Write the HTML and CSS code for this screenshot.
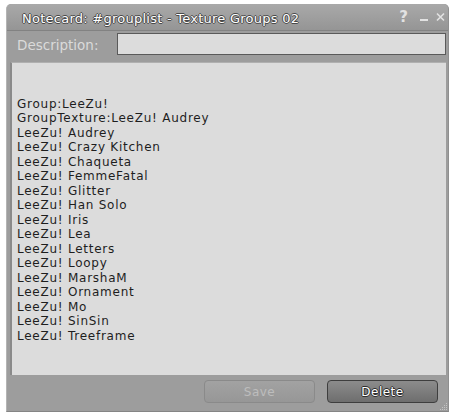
FILE: index.html
```html
<!DOCTYPE html>
<html>
<head>
<meta charset="utf-8">
<link rel="stylesheet" href="styles.css">
</head>
<body>
<div class="window">
  <div class="titlebar">
    <span class="title">Notecard: #grouplist - Texture Groups 02</span>
    <span class="controls">
      <span class="ctl help">?</span>
      <svg class="ctl-svg min" width="8" height="10" viewBox="0 0 8 10"><rect x="0" y="7" width="8" height="2" fill="#e2e2e2"/></svg>
      <svg class="ctl-svg close" width="9" height="10" viewBox="0 0 9 10"><path d="M1 1.5 L8 8.5 M8 1.5 L1 8.5" stroke="#e2e2e2" stroke-width="1.6"/></svg>
    </span>
  </div>
  <div class="descrow">
    <span class="desclabel">Description:</span>
    <div class="descinput"></div>
  </div>
  <div class="editor">
    <div class="line">&nbsp;</div>
    <div class="line">Group:LeeZu!</div>
    <div class="line">GroupTexture:LeeZu! Audrey</div>
    <div class="line">LeeZu! Audrey</div>
    <div class="line">LeeZu! Crazy Kitchen</div>
    <div class="line">LeeZu! Chaqueta</div>
    <div class="line">LeeZu! FemmeFatal</div>
    <div class="line">LeeZu! Glitter</div>
    <div class="line">LeeZu! Han Solo</div>
    <div class="line">LeeZu! Iris</div>
    <div class="line">LeeZu! Lea</div>
    <div class="line">LeeZu! Letters</div>
    <div class="line">LeeZu! Loopy</div>
    <div class="line">LeeZu! MarshaM</div>
    <div class="line">LeeZu! Ornament</div>
    <div class="line">LeeZu! Mo</div>
    <div class="line">LeeZu! SinSin</div>
    <div class="line">LeeZu! Treeframe</div>
  </div>
  <div class="footer">
    <div class="btn btn-disabled">Save</div>
    <div class="btn btn-primary">Delete</div>
    <svg class="grip" width="10" height="10" viewBox="0 0 10 10">
      <g fill="#c4c4c4">
        <rect x="8" y="2" width="1" height="1"/>
        <rect x="6" y="4" width="1" height="1"/><rect x="8" y="4" width="1" height="1"/>
        <rect x="4" y="6" width="1" height="1"/><rect x="6" y="6" width="1" height="1"/><rect x="8" y="6" width="1" height="1"/>
        <rect x="2" y="8" width="1" height="1"/><rect x="4" y="8" width="1" height="1"/><rect x="6" y="8" width="1" height="1"/><rect x="8" y="8" width="1" height="1"/>
      </g>
    </svg>
  </div>
</div>
</body>
</html>
```
FILE: styles.css
```css
html, body {
  margin: 0;
  padding: 0;
  background: #ffffff;
}
body {
  font-family: "DejaVu Sans", "Liberation Sans", sans-serif;
}
.window {
  margin: 4px 0 0 6px;
  width: 443px;
  height: 408px;
  background: #9d9d9d;
  border-radius: 5px 5px 0 0;
  box-sizing: border-box;
  border-left: 1px solid #b4b4b4;
  border-bottom: 1px solid #858585;
  border-right: 1px solid #8f8f8f;
  display: flex;
  flex-direction: column;
  position: relative;
}
.titlebar {
  height: 26px;
  flex: none;
  background: linear-gradient(#a9a9a9, #959595);
  border-bottom: 1px solid #828282;
  border-radius: 5px 5px 0 0;
  display: flex;
  align-items: center;
  padding: 0 3px 0 15px;
}
.title {
  flex: 1;
  color: #ffffff;
  font-size: 13px;
  letter-spacing: 0.25px;
  text-shadow: -1px 0 #4a4a4a, 1px 0 #4a4a4a, 0 -1px #4a4a4a, 0 1px #4a4a4a;
  padding-top: 2px;
}
.controls {
  display: flex;
  align-items: center;
}
.ctl {
  color: #e2e2e2;
  font-size: 15px;
  font-weight: bold;
  line-height: 15px;
}
.ctl-svg { display: block; }
.min { margin-left: 12px; }
.close { margin-left: 8px; }
.descrow {
  height: 31px;
  flex: none;
  display: flex;
  align-items: center;
  padding: 0 2px 0 10px;
}
.desclabel {
  color: #dadada;
  font-size: 13.5px;
  width: 100px;
  margin-top: -4px;
}
.descinput {
  flex: 1;
  height: 20px;
  margin-top: -6px;
  background: #dcdcdc;
  border: 1px solid #5a5a5a;
}
.editor {
  flex: none;
  height: 313px;
  margin: 0 2px 0 3px;
  background: #dcdcdc;
  border-left: 2px solid #8a8a8a;
  border-top: 1px solid #b0b0b0;
  box-sizing: border-box;
  padding: 19px 0 0 5px;
  font-size: 12px;
  letter-spacing: 0.75px;
  line-height: 14.5px;
  color: #1e1e1e;
}
.line {
  white-space: pre;
}
.footer {
  flex: 1;
  display: flex;
  align-items: flex-start;
  justify-content: flex-end;
  gap: 12px;
  padding: 5px 10px 0 0;
  position: relative;
}
.btn {
  width: 109px;
  height: 21px;
  border-radius: 4px;
  display: flex;
  align-items: center;
  justify-content: center;
  font-size: 12px;
  letter-spacing: 0.5px;
}
.btn-disabled {
  background: linear-gradient(#a2a2a2, #979797);
  border: 1px solid #8a8a8a;
  color: #bdbdbd;
}
.btn-primary {
  background: linear-gradient(#8c8c8c, #6e6e6e);
  border: 1px solid #3e3e3e;
  color: #ffffff;
  text-shadow: -1px 0 #2e2e2e, 1px 0 #2e2e2e, 0 -1px #2e2e2e, 0 1px #2e2e2e;
}
.grip {
  position: absolute;
  right: 0;
  bottom: 0;
}
```
